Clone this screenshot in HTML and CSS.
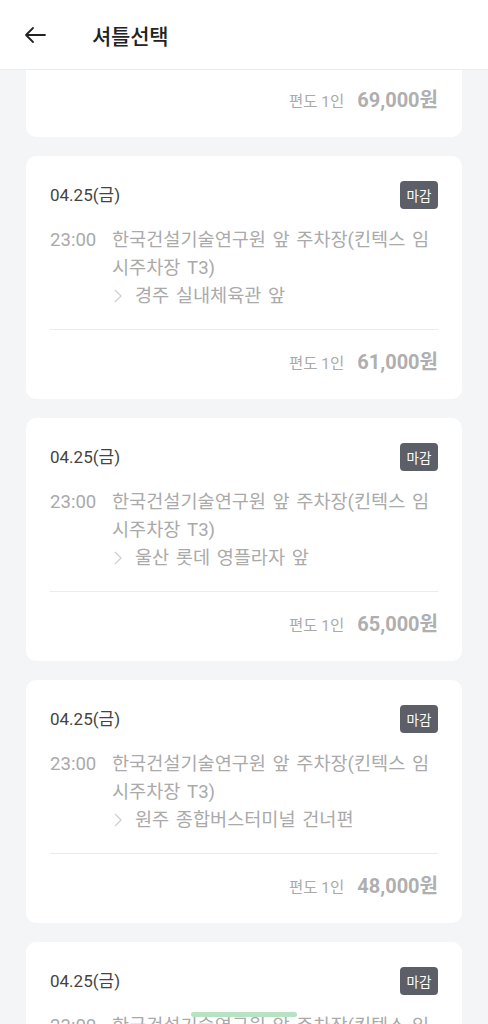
FILE: index.html
```html
<!DOCTYPE html>
<html lang="ko">
<head>
<meta charset="utf-8">
<link rel="stylesheet" href="styles.css">
</head>
<body>
<header class="topbar">
  <svg class="back" width="24" height="24" viewBox="0 0 24 24"><path d="M22 12H3M10 5l-7 7 7 7" fill="none" stroke="#222" stroke-width="1.8" stroke-linecap="round" stroke-linejoin="round"/></svg>
  <h1 class="title">셔틀선택</h1>
</header>
<main class="list">
  <section class="card card-cut">
    <div class="price"><span class="label">편도 1인</span><span class="amount">69,000원</span></div>
  </section>
  <section class="card">
    <div class="head"><span class="date">04.25(금)</span><span class="badge">마감</span></div>
    <div class="route"><span class="time">23:00</span><div class="place"><p>한국건설기술연구원 앞 주차장(킨텍스 임시주차장 T3)</p><p class="dest"><svg class="chev" width="10" height="14" viewBox="0 0 10 14"><path d="M2 1l6 6-6 6" fill="none" stroke="#cfcfcf" stroke-width="1.3"/></svg>경주 실내체육관 앞</p></div></div>
    <div class="price"><span class="label">편도 1인</span><span class="amount">61,000원</span></div>
  </section>
  <section class="card">
    <div class="head"><span class="date">04.25(금)</span><span class="badge">마감</span></div>
    <div class="route"><span class="time">23:00</span><div class="place"><p>한국건설기술연구원 앞 주차장(킨텍스 임시주차장 T3)</p><p class="dest"><svg class="chev" width="10" height="14" viewBox="0 0 10 14"><path d="M2 1l6 6-6 6" fill="none" stroke="#cfcfcf" stroke-width="1.3"/></svg>울산 롯데 영플라자 앞</p></div></div>
    <div class="price"><span class="label">편도 1인</span><span class="amount">65,000원</span></div>
  </section>
  <section class="card">
    <div class="head"><span class="date">04.25(금)</span><span class="badge">마감</span></div>
    <div class="route"><span class="time">23:00</span><div class="place"><p>한국건설기술연구원 앞 주차장(킨텍스 임시주차장 T3)</p><p class="dest"><svg class="chev" width="10" height="14" viewBox="0 0 10 14"><path d="M2 1l6 6-6 6" fill="none" stroke="#cfcfcf" stroke-width="1.3"/></svg>원주 종합버스터미널 건너편</p></div></div>
    <div class="price"><span class="label">편도 1인</span><span class="amount">48,000원</span></div>
  </section>
  <section class="card">
    <div class="head"><span class="date">04.25(금)</span><span class="badge">마감</span></div>
    <div class="route"><span class="time">23:00</span><div class="place"><p>한국건설기술연구원 앞 주차장(킨텍스 임시주차장 T3)</p><p class="dest"><svg class="chev" width="10" height="14" viewBox="0 0 10 14"><path d="M2 1l6 6-6 6" fill="none" stroke="#cfcfcf" stroke-width="1.3"/></svg>원주 종합버스터미널 건너편</p></div></div>
    <div class="price"><span class="label">편도 1인</span><span class="amount">48,000원</span></div>
  </section>
</main>
<div class="indicator"></div>
</body>
</html>
```
FILE: styles.css
```css
html, body { margin: 0; padding: 0; }
body {
  width: 488px;
  height: 1024px;
  overflow: hidden;
  background: #f4f5f7;
  font-family: Roboto, "Noto Sans CJK KR", sans-serif;
  position: relative;
}
.topbar {
  height: 70px;
  background: #fff;
  border-bottom: 1px solid #ececec;
  display: flex;
  align-items: center;
  box-sizing: border-box;
  padding-left: 23px;
}
.back { display: block; }
.title {
  margin: 0 0 0 45px;
  font-family: "Noto Sans CJK KR", sans-serif;
  font-size: 21px;
  font-weight: 500;
  color: #222;
  letter-spacing: -0.2px;
}
.list {
  display: flex;
  flex-direction: column;
  gap: 19px;
  padding: 0 26px;
  margin-top: 0;
}
.card {
  background: #fff;
  border-radius: 10px;
  padding: 25px 24px 23px;
  flex-shrink: 0;
}
.card-cut {
  padding-top: 0;
  border-radius: 0 0 10px 10px;
}
.card-cut .price { padding-top: 16px; }
.head {
  display: flex;
  justify-content: space-between;
  align-items: center;
  height: 28px;
}
.date {
  font-size: 17px;
  color: #444;
  line-height: 28px;
}
.badge {
  background: #5c5f67;
  color: #fff;
  font-family: "Noto Sans CJK KR", sans-serif;
  font-size: 13.5px;
  border-radius: 4px;
  width: 38px;
  height: 28px;
  display: flex;
  align-items: center;
  justify-content: center;
}
.route {
  display: flex;
  gap: 12px;
  margin-top: 17px;
  padding-bottom: 19px;
  border-bottom: 1px solid #ececec;
  color: #aaa;
  font-size: 18.6px;
  line-height: 28px;
}
.time { flex-shrink: 0; width: 50px; }
.place { flex: 1; min-width: 0; word-spacing: 2px; }
.place p { margin: 0; }
.dest { display: flex; align-items: center; }
.chev {
  display: block;
  flex-shrink: 0;
  margin: 0 12px 0 1px;
}
.price {
  display: flex;
  justify-content: flex-end;
  align-items: baseline;
  height: 28px;
  padding-top: 18px;
  line-height: 28px;
}
.label {
  font-size: 15.5px;
  color: #aaa;
  margin-right: 13px;
}
.amount {
  font-size: 20px;
  font-weight: 700;
  color: #afafaf;
}
.indicator {
  position: absolute;
  left: 191px;
  top: 1012px;
  width: 106px;
  height: 5px;
  border-radius: 3px;
  background: #b7e3c4;
}
```
